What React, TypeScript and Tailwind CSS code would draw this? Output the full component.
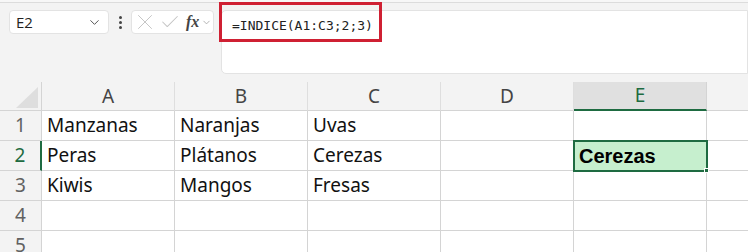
import { ChevronDown, X, Check } from 'lucide-react'

const cols = ['A', 'B', 'C', 'D', 'E']

const data: string[][] = [
  ['Manzanas', 'Naranjas', 'Uvas', '', ''],
  ['Peras', 'Plátanos', 'Cerezas', '', 'Cerezas'],
  ['Kiwis', 'Mangos', 'Fresas', '', ''],
  ['', '', '', '', ''],
  ['', '', '', '', ''],
]

export default function App() {
  return (
    <div className="relative w-[748px] h-[252px] overflow-hidden bg-[#f3f3f3] font-['Noto_Sans',sans-serif]">
      {/* top strip */}
      <div className="h-[3px] border-b border-[#dcdcdc] bg-[#f7f7f7]" />

      {/* formula toolbar */}
      <div className="flex items-start h-[79px] pt-[7px] pl-[9px]">
        <div className="flex items-center justify-between w-[100px] h-[24px] bg-white rounded-[4px] border border-[#e3e3e3] pl-[6px] pr-[6px]">
          <span className="text-[15px] text-[#222] font-['Open_Sans',sans-serif]">E2</span>
          <ChevronDown className="w-[15px] h-[15px] text-[#555]" strokeWidth={1.6} />
        </div>
        <div className="flex flex-col items-center justify-center gap-[2px] w-[22px] h-[24px]">
          <span className="w-[3px] h-[3px] rounded-full bg-[#444]" />
          <span className="w-[3px] h-[3px] rounded-full bg-[#444]" />
          <span className="w-[3px] h-[3px] rounded-full bg-[#444]" />
        </div>
        <div className="flex items-center w-[83px] h-[24px] bg-white rounded-[4px] border border-[#e3e3e3] pl-0">
          <X className="w-[26px] h-[26px] -my-[2px] text-[#c4c4c4]" strokeWidth={0.9} />
          <Check className="w-[22px] h-[22px] ml-[1px] text-[#c4c4c4]" strokeWidth={1.1} />
          <span className="ml-[5px] text-[16px] italic font-bold text-[#444] font-['Liberation_Serif',serif] leading-none">fx</span>
          <ChevronDown className="w-[11px] h-[11px] ml-[2px] text-[#999]" strokeWidth={1.6} />
        </div>
        <div className="ml-[7px] flex-1 h-[64px] bg-white rounded-l-[5px] border border-[#e3e3e3] pl-[10px] pt-[1px]">
          <span className="text-[13px] text-[#222] font-['DejaVu_Sans_Mono',monospace]">=INDICE(A1:C3;2;3)</span>
        </div>
      </div>

      {/* annotation box */}
      <div className="absolute left-[219px] top-[2px] w-[163px] h-[40px] border-[3px] border-[#cf2033]" />

      {/* sheet */}
      <div className="grid grid-cols-[42px_133px_133px_133px_133px_133px_1fr]">
        {/* header row */}
        <div className="h-[29px] border-b border-[#d4d4d4] border-r border-r-[#d4d4d4] flex items-end justify-end pr-[3px] pb-[2px]">
          <div className="w-0 h-0 border-l-[22px] border-l-transparent border-b-[21px] border-b-[#dedede]" />
        </div>
        {cols.map((c) => {
          const sel = c === 'E'
          return (
            <div
              key={c}
              className={
                sel
                  ? 'h-[29px] flex items-center justify-center bg-[#e0e0e0] border-b-2 border-[#1e6b41] border-r border-r-[#d4d4d4] text-[19px] text-[#1e6b41]'
                  : 'h-[29px] flex items-center justify-center border-b border-[#d4d4d4] border-r border-r-[#dedede] text-[19px] text-[#444]'
              }
            >
              {c}
            </div>
          )
        })}
        <div className="h-[29px] border-b border-[#d4d4d4]" />

        {data.map((row, ri) => (
          <Row key={ri} index={ri + 1} cells={row} />
        ))}
      </div>
    </div>
  )
}

function Row({ index, cells }: { index: number; cells: string[] }) {
  const selRow = index === 2
  return (
    <>
      <div
        className={
          selRow
            ? 'h-[30px] flex items-center justify-center border-b border-[#d4d4d4] border-r-2 border-r-[#1e6b41] text-[19px] text-[#1e6b41]'
            : 'h-[30px] flex items-center justify-center border-b border-[#d4d4d4] border-r border-r-[#d4d4d4] text-[19px] text-[#616161]'
        }
      >
        {index}
      </div>
      {cells.map((v, ci) => {
        const active = selRow && ci === 4
        if (active) {
          return (
            <div
              key={ci}
              className="relative h-[30px] flex items-center pl-[5px] bg-[#c6efce] outline-2 outline-[#1e6b41] -outline-offset-1 border-b border-r border-[#d4d4d4] text-[20px] font-bold text-black font-['Liberation_Sans',sans-serif]"
            >
              {v}
              <span className="absolute -right-[3px] -bottom-[3px] w-[5px] h-[5px] bg-[#1e6b41] border border-white" />
            </div>
          )
        }
        return (
          <div
            key={ci}
            className="h-[30px] flex items-center pl-[5px] bg-white border-b border-r border-[#d4d4d4] text-[19px] text-[#111]"
          >
            {v}
          </div>
        )
      })}
      <div className="h-[30px] bg-white border-b border-[#d4d4d4]" />
    </>
  )
}
